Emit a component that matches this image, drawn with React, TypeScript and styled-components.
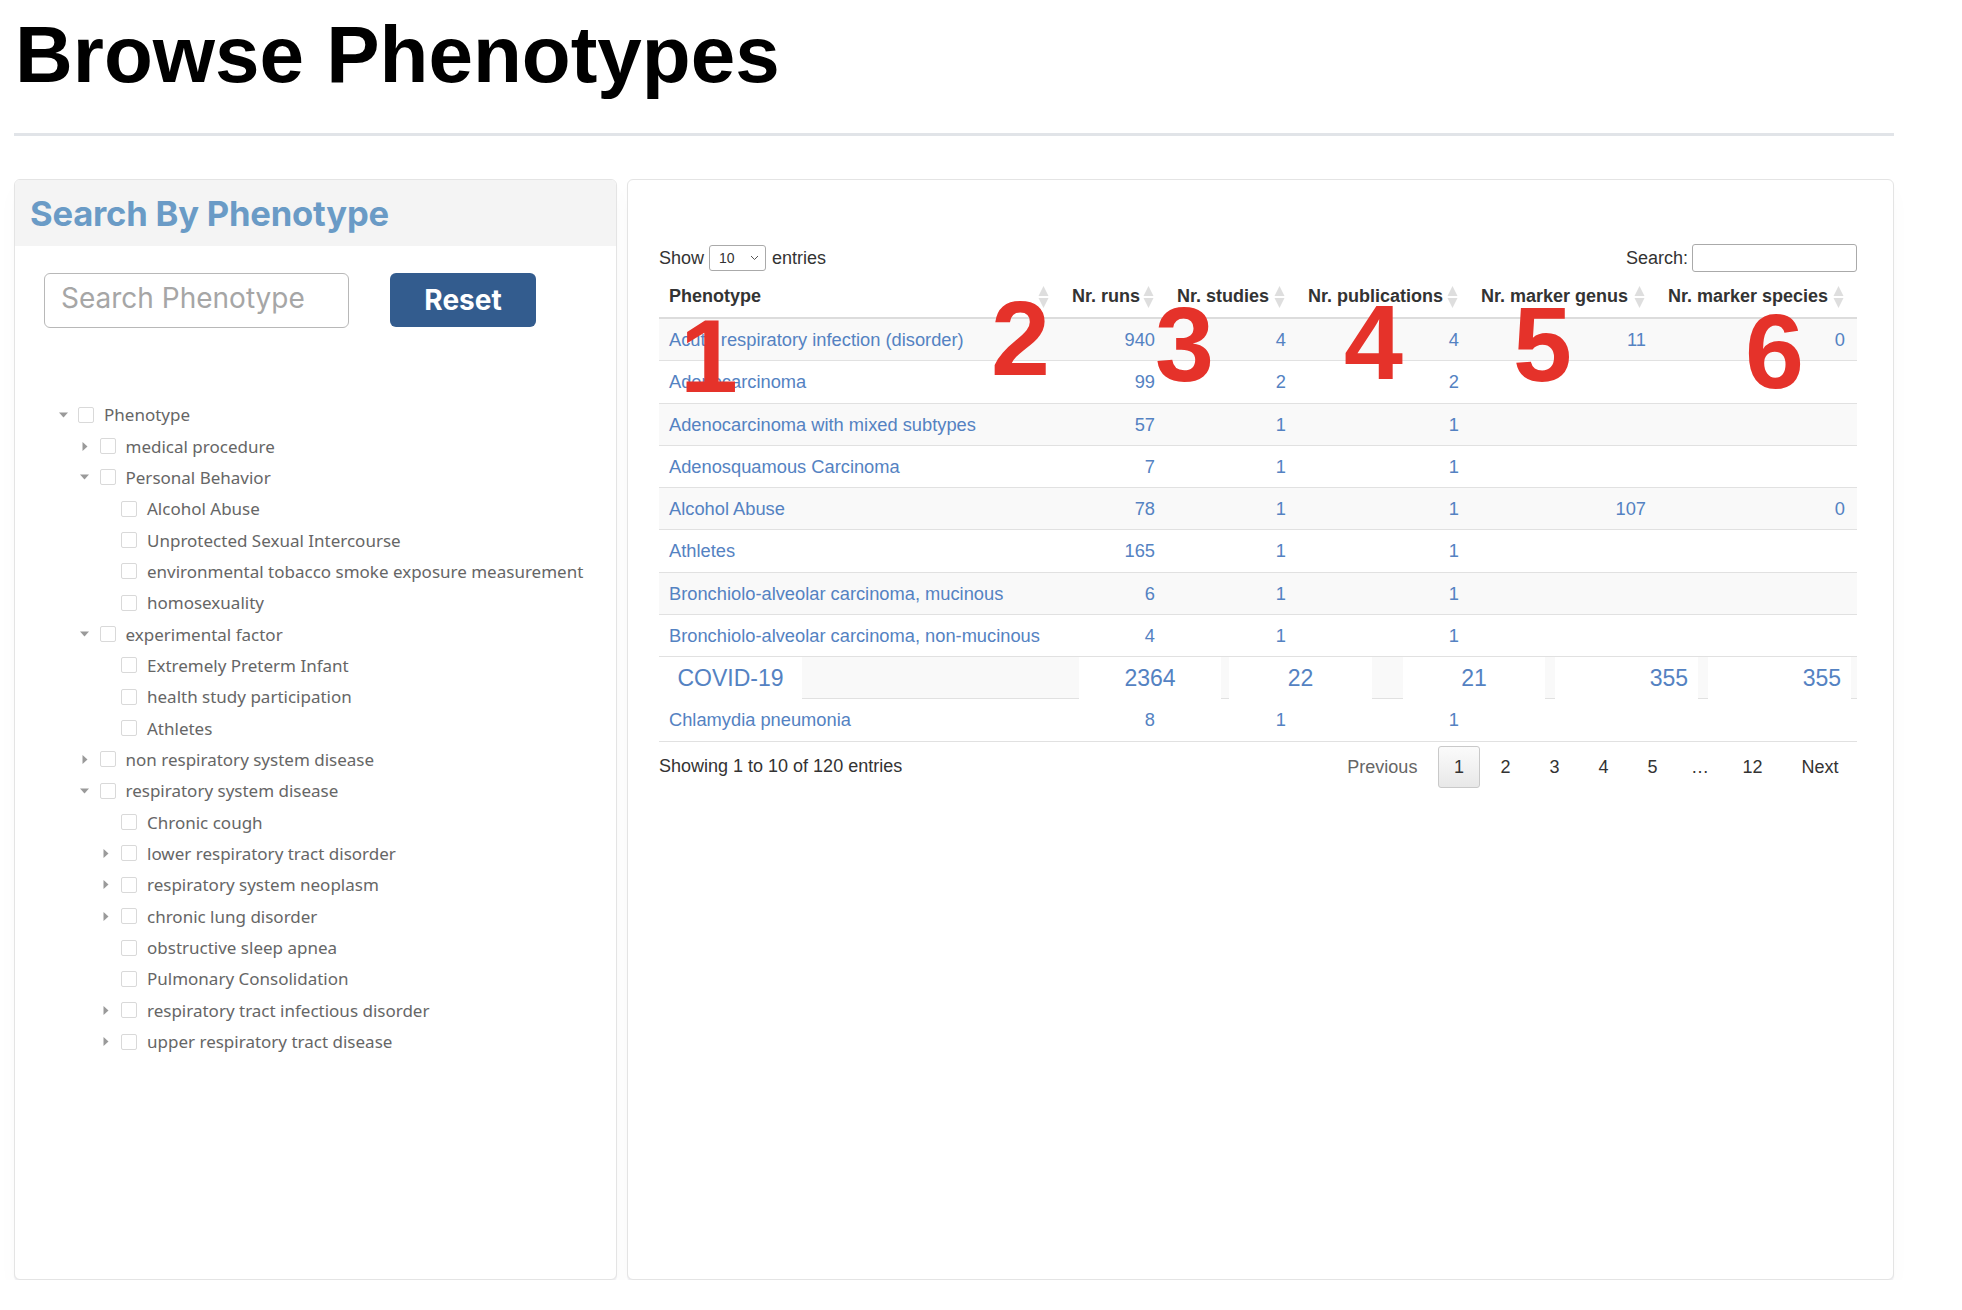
import React from "react";
import styled, { createGlobalStyle } from "styled-components";

const GlobalStyle = createGlobalStyle`
  html, body { margin: 0; padding: 0; background: #fff; }
  body { font-family: "Liberation Sans", Arial, sans-serif; color: #333; }
  * { box-sizing: border-box; }
`;

const LINK = "#5482c2";

const Page = styled.div`
  width: 1880px;
  margin-left: 14px;
`;

const Title = styled.h1`
  margin: 7px 0 0 1px;
  font: 700 80px/96px "Liberation Sans", Arial, sans-serif;
  color: #000;
`;

const Rule = styled.hr`
  margin: 30px 0 0;
  border: 0;
  border-top: 3px solid #e1e4e8;
`;

const Panels = styled.div`
  display: flex;
  gap: 10px;
  margin-top: 43px;
`;

const Card = styled.section<{ $w: number }>`
  position: relative;
  width: ${(p) => p.$w}px;
  height: 1101px;
  border: 1px solid #e4e4e4;
  border-radius: 6px;
  background: #fff;
  box-shadow: 0 2px 1px rgba(40, 40, 90, 0.07), 0 10px 24px rgba(0, 0, 0, 0.02);
  overflow: hidden;
`;

/* ---------- Left panel ---------- */

const CardHeader = styled.div`
  height: 66px;
  background: #f4f4f4;
  display: flex;
  align-items: center;
  padding-left: 15px;
  font: 700 34.6px "Inter", "Roboto", sans-serif;
  color: #6a9bc6;
  letter-spacing: -0.2px;
`;

const SearchRow = styled.div`
  display: flex;
  gap: 41px;
  padding: 27px 0 0 29px;
`;

const PhenoInput = styled.input`
  width: 305px;
  height: 55px;
  border: 1px solid #b8b8b8;
  border-radius: 6px;
  padding: 0 0 5px 16px;
  font: 400 28px "Inter", sans-serif;
  color: #333;
  outline: none;
  &::placeholder { color: #a6a6a6; }
`;

const ResetButton = styled.button`
  width: 146px;
  height: 54px;
  border: 0;
  border-radius: 6px;
  background: #335c8e;
  color: #fff;
  font: 700 28px "Inter", sans-serif;
  cursor: pointer;
`;

const Tree = styled.ul`
  list-style: none;
  margin: 71px 0 0;
  padding: 0;
`;

const TreeRow = styled.li<{ $level: number }>`
  height: 31.35px;
  display: flex;
  align-items: center;
  padding-left: ${(p) => 40 + p.$level * 21.5}px;
  font: 400 17px "Noto Sans", "Open Sans", sans-serif;
  color: #666;
  white-space: nowrap;
`;

const CaretBox = styled.span`
  width: 16px;
  height: 16px;
  display: flex;
  align-items: center;
  justify-content: center;
`;

const Check = styled.span`
  width: 16px;
  height: 16px;
  margin-left: 7px;
  border: 1px solid #d9d9d9;
  border-radius: 2px;
  background: #fff;
  flex: none;
`;

const TreeLabel = styled.span`
  margin-left: 10px;
`;

type Node = { label: string; level: number; caret?: "open" | "closed" };

const tree: Node[] = [
  { label: "Phenotype", level: 0, caret: "open" },
  { label: "medical procedure", level: 1, caret: "closed" },
  { label: "Personal Behavior", level: 1, caret: "open" },
  { label: "Alcohol Abuse", level: 2 },
  { label: "Unprotected Sexual Intercourse", level: 2 },
  { label: "environmental tobacco smoke exposure measurement", level: 2 },
  { label: "homosexuality", level: 2 },
  { label: "experimental factor", level: 1, caret: "open" },
  { label: "Extremely Preterm Infant", level: 2 },
  { label: "health study participation", level: 2 },
  { label: "Athletes", level: 2 },
  { label: "non respiratory system disease", level: 1, caret: "closed" },
  { label: "respiratory system disease", level: 1, caret: "open" },
  { label: "Chronic cough", level: 2 },
  { label: "lower respiratory tract disorder", level: 2, caret: "closed" },
  { label: "respiratory system neoplasm", level: 2, caret: "closed" },
  { label: "chronic lung disorder", level: 2, caret: "closed" },
  { label: "obstructive sleep apnea", level: 2 },
  { label: "Pulmonary Consolidation", level: 2 },
  { label: "respiratory tract infectious disorder", level: 2, caret: "closed" },
  { label: "upper respiratory tract disease", level: 2, caret: "closed" },
];

const Caret = ({ kind }: { kind?: "open" | "closed" }) => {
  if (!kind) return <CaretBox />;
  return (
    <CaretBox>
      {kind === "open" ? (
        <svg width="9" height="6" viewBox="0 0 9 6">
          <polygon points="0,0.5 9,0.5 4.5,5.5" fill="#9a9a9a" />
        </svg>
      ) : (
        <svg width="6" height="9" viewBox="0 0 6 9">
          <polygon points="0.5,0 5.5,4.5 0.5,9" fill="#9a9a9a" />
        </svg>
      )}
    </CaretBox>
  );
};

/* ---------- Right panel ---------- */

const TableArea = styled.div`
  padding: 64px 36px 0 31px;
`;

const Controls = styled.div`
  height: 28px;
  display: flex;
  align-items: center;
  justify-content: space-between;
  font-size: 18px;
  color: #333;
`;

const Inline = styled.label`
  display: flex;
  align-items: center;
`;

const SelectBox = styled.span`
  width: 57px;
  height: 26px;
  margin: 0 6px 0 5px;
  border: 1px solid #aaa;
  border-radius: 3px;
  display: flex;
  align-items: center;
  justify-content: space-between;
  padding: 0 6px 0 9px;
  font-size: 14px;
  color: #333;
`;

const SearchBox = styled.input`
  width: 165px;
  height: 28px;
  margin-left: 4px;
  border: 1px solid #aaa;
  border-radius: 3px;
  outline: none;
`;

const Table = styled.table`
  width: 1198px;
  margin-top: 5px;
  border-collapse: separate;
  border-spacing: 0;
  table-layout: fixed;
  font-size: 18px;
`;

const Th = styled.th`
  position: relative;
  text-align: left;
  font-weight: 700;
  color: #333;
  padding: 8px 18px 10px 10px;
  line-height: 22px;
  white-space: nowrap;
  border-bottom: 2px solid #dcdcdc;
`;

const SortIcon = styled.svg`
  position: absolute;
  right: 13px;
  top: 50%;
  margin-top: -13px;
`;

const Tr = styled.tr<{ $striped: boolean }>`
  background: ${(p) => (p.$striped ? "#f9f9f9" : "#fff")};
`;

const Td = styled.td<{ $num?: boolean }>`
  padding: ${(p) => (p.$num ? "0 12px 0 0" : "0 0 0 10px")};
  text-align: ${(p) => (p.$num ? "right" : "left")};
  font-size: 18.3px;
  line-height: 41.27px;
  border-bottom: 1px solid #e1e1e1;
  color: ${LINK};
  white-space: nowrap;
`;

const StripCell = styled.td`
  padding: 0;
  border-bottom: 1px solid #e1e1e1;
`;

const Strip = styled.div`
  display: grid;
  grid-template-columns: 143px 277px 142px 8px 143px 31px 142px 10px 143px 10px 143px 6px;
  background: #f9f9f9;
  height: 41.27px;
`;

const StripItem = styled.span<{ $col: number; $right?: boolean }>`
  grid-column: ${(p) => p.$col};
  background: #fff;
  font-size: 23px;
  line-height: 43px;
  color: ${LINK};
  text-align: ${(p) => (p.$right ? "right" : "center")};
  padding-right: ${(p) => (p.$right ? "10px" : "0")};
`;

const Footer = styled.div`
  margin-top: 4px;
  display: flex;
  align-items: center;
  justify-content: space-between;
  font-size: 18px;
  color: #333;
`;

const Pager = styled.div`
  display: flex;
  align-items: center;
  gap: 2px;
`;

const PageBtn = styled.span<{ $current?: boolean; $disabled?: boolean }>`
  height: 42px;
  line-height: 40px;
  padding: 0 ${(p) => (p.$current ? "15px" : "17.5px")};
  border: 1px solid ${(p) => (p.$current ? "#c9c9c9" : "transparent")};
  border-radius: 3px;
  background: ${(p) => (p.$current ? "linear-gradient(#fbfbfb, #e8e8e8)" : "transparent")};
  color: ${(p) => (p.$disabled ? "#666" : "#333")};
`;

const Ellipsis = styled.span`
  padding: 0 13px;
  line-height: 42px;
`;

const Annot = styled.span<{ $x: number; $y: number; $size?: number }>`
  position: absolute;
  left: ${(p) => p.$x}px;
  top: ${(p) => p.$y}px;
  font: 700 ${(p) => p.$size ?? 106}px/1 "Liberation Sans", Arial, sans-serif;
  color: #e5322a;
  pointer-events: none;
`;

const Sort = () => (
  <SortIcon width="11" height="26" viewBox="0 0 11 26">
    <polygon points="5.5,2 10.5,12 0.5,12" fill="#dedede" />
    <polygon points="0.5,14 10.5,14 5.5,24" fill="#dedede" />
  </SortIcon>
);

const headers = [
  { label: "Phenotype", w: 403 },
  { label: "Nr. runs", w: 105 },
  { label: "Nr. studies", w: 131 },
  { label: "Nr. publications", w: 173 },
  { label: "Nr. marker genus", w: 187 },
  { label: "Nr. marker species", w: 199 },
];

type Row = { name: string; vals: string[]; covid?: boolean };

const rows: Row[] = [
  { name: "Acute respiratory infection (disorder)", vals: ["940", "4", "4", "11", "0"] },
  { name: "Adenocarcinoma", vals: ["99", "2", "2", "", ""] },
  { name: "Adenocarcinoma with mixed subtypes", vals: ["57", "1", "1", "", ""] },
  { name: "Adenosquamous Carcinoma", vals: ["7", "1", "1", "", ""] },
  { name: "Alcohol Abuse", vals: ["78", "1", "1", "107", "0"] },
  { name: "Athletes", vals: ["165", "1", "1", "", ""] },
  { name: "Bronchiolo-alveolar carcinoma, mucinous", vals: ["6", "1", "1", "", ""] },
  { name: "Bronchiolo-alveolar carcinoma, non-mucinous", vals: ["4", "1", "1", "", ""] },
  { name: "COVID-19", vals: ["2364", "22", "21", "355", "355"], covid: true },
  { name: "Chlamydia pneumonia", vals: ["8", "1", "1", "", ""] },
];

export default function App() {
  return (
    <>
      <GlobalStyle />
      <Page>
        <Title>Browse Phenotypes</Title>
        <Rule />
        <Panels>
          <Card $w={603}>
            <CardHeader>Search By Phenotype</CardHeader>
            <SearchRow>
              <PhenoInput placeholder="Search Phenotype" />
              <ResetButton>Reset</ResetButton>
            </SearchRow>
            <Tree>
              {tree.map((n, i) => (
                <TreeRow key={i} $level={n.level}>
                  <Caret kind={n.caret} />
                  <Check />
                  <TreeLabel>{n.label}</TreeLabel>
                </TreeRow>
              ))}
            </Tree>
          </Card>

          <Card $w={1267}>
            <TableArea>
              <Controls>
                <Inline>
                  Show
                  <SelectBox>
                    10
                    <svg width="9" height="6" viewBox="0 0 9 6">
                      <polyline points="1,1 4.5,4.5 8,1" fill="none" stroke="#555" strokeWidth="1" />
                    </svg>
                  </SelectBox>
                  entries
                </Inline>
                <Inline>
                  Search:
                  <SearchBox />
                </Inline>
              </Controls>
              <Table>
                <colgroup>
                  {headers.map((h) => (
                    <col key={h.label} style={{ width: h.w }} />
                  ))}
                </colgroup>
                <thead>
                  <tr>
                    {headers.map((h) => (
                      <Th key={h.label}>
                        {h.label}
                        <Sort />
                      </Th>
                    ))}
                  </tr>
                </thead>
                <tbody>
                  {rows.map((r, i) =>
                    r.covid ? (
                      <tr key={r.name}>
                        <StripCell colSpan={6}>
                          <Strip>
                            <StripItem $col={1}>{r.name}</StripItem>
                            <StripItem $col={3}>{r.vals[0]}</StripItem>
                            <StripItem $col={5}>{r.vals[1]}</StripItem>
                            <StripItem $col={7}>{r.vals[2]}</StripItem>
                            <StripItem $col={9} $right>{r.vals[3]}</StripItem>
                            <StripItem $col={11} $right>{r.vals[4]}</StripItem>
                          </Strip>
                        </StripCell>
                      </tr>
                    ) : (
                      <Tr key={r.name} $striped={i % 2 === 0}>
                        <Td>{r.name}</Td>
                        {r.vals.map((v, j) => (
                          <Td key={j} $num>
                            {v}
                          </Td>
                        ))}
                      </Tr>
                    )
                  )}
                </tbody>
              </Table>
              <Footer>
                <span>Showing 1 to 10 of 120 entries</span>
                <Pager>
                  <PageBtn $disabled>Previous</PageBtn>
                  <PageBtn $current>1</PageBtn>
                  <PageBtn>2</PageBtn>
                  <PageBtn>3</PageBtn>
                  <PageBtn>4</PageBtn>
                  <PageBtn>5</PageBtn>
                  <Ellipsis>…</Ellipsis>
                  <PageBtn>12</PageBtn>
                  <PageBtn>Next</PageBtn>
                </Pager>
              </Footer>
            </TableArea>
            <Annot $x={52} $y={124} $size={104}>1</Annot>
            <Annot $x={363} $y={105}>2</Annot>
            <Annot $x={527} $y={111}>3</Annot>
            <Annot $x={716} $y={109}>4</Annot>
            <Annot $x={885} $y={111}>5</Annot>
            <Annot $x={1117} $y={118}>6</Annot>
          </Card>
        </Panels>
      </Page>
    </>
  );
}
